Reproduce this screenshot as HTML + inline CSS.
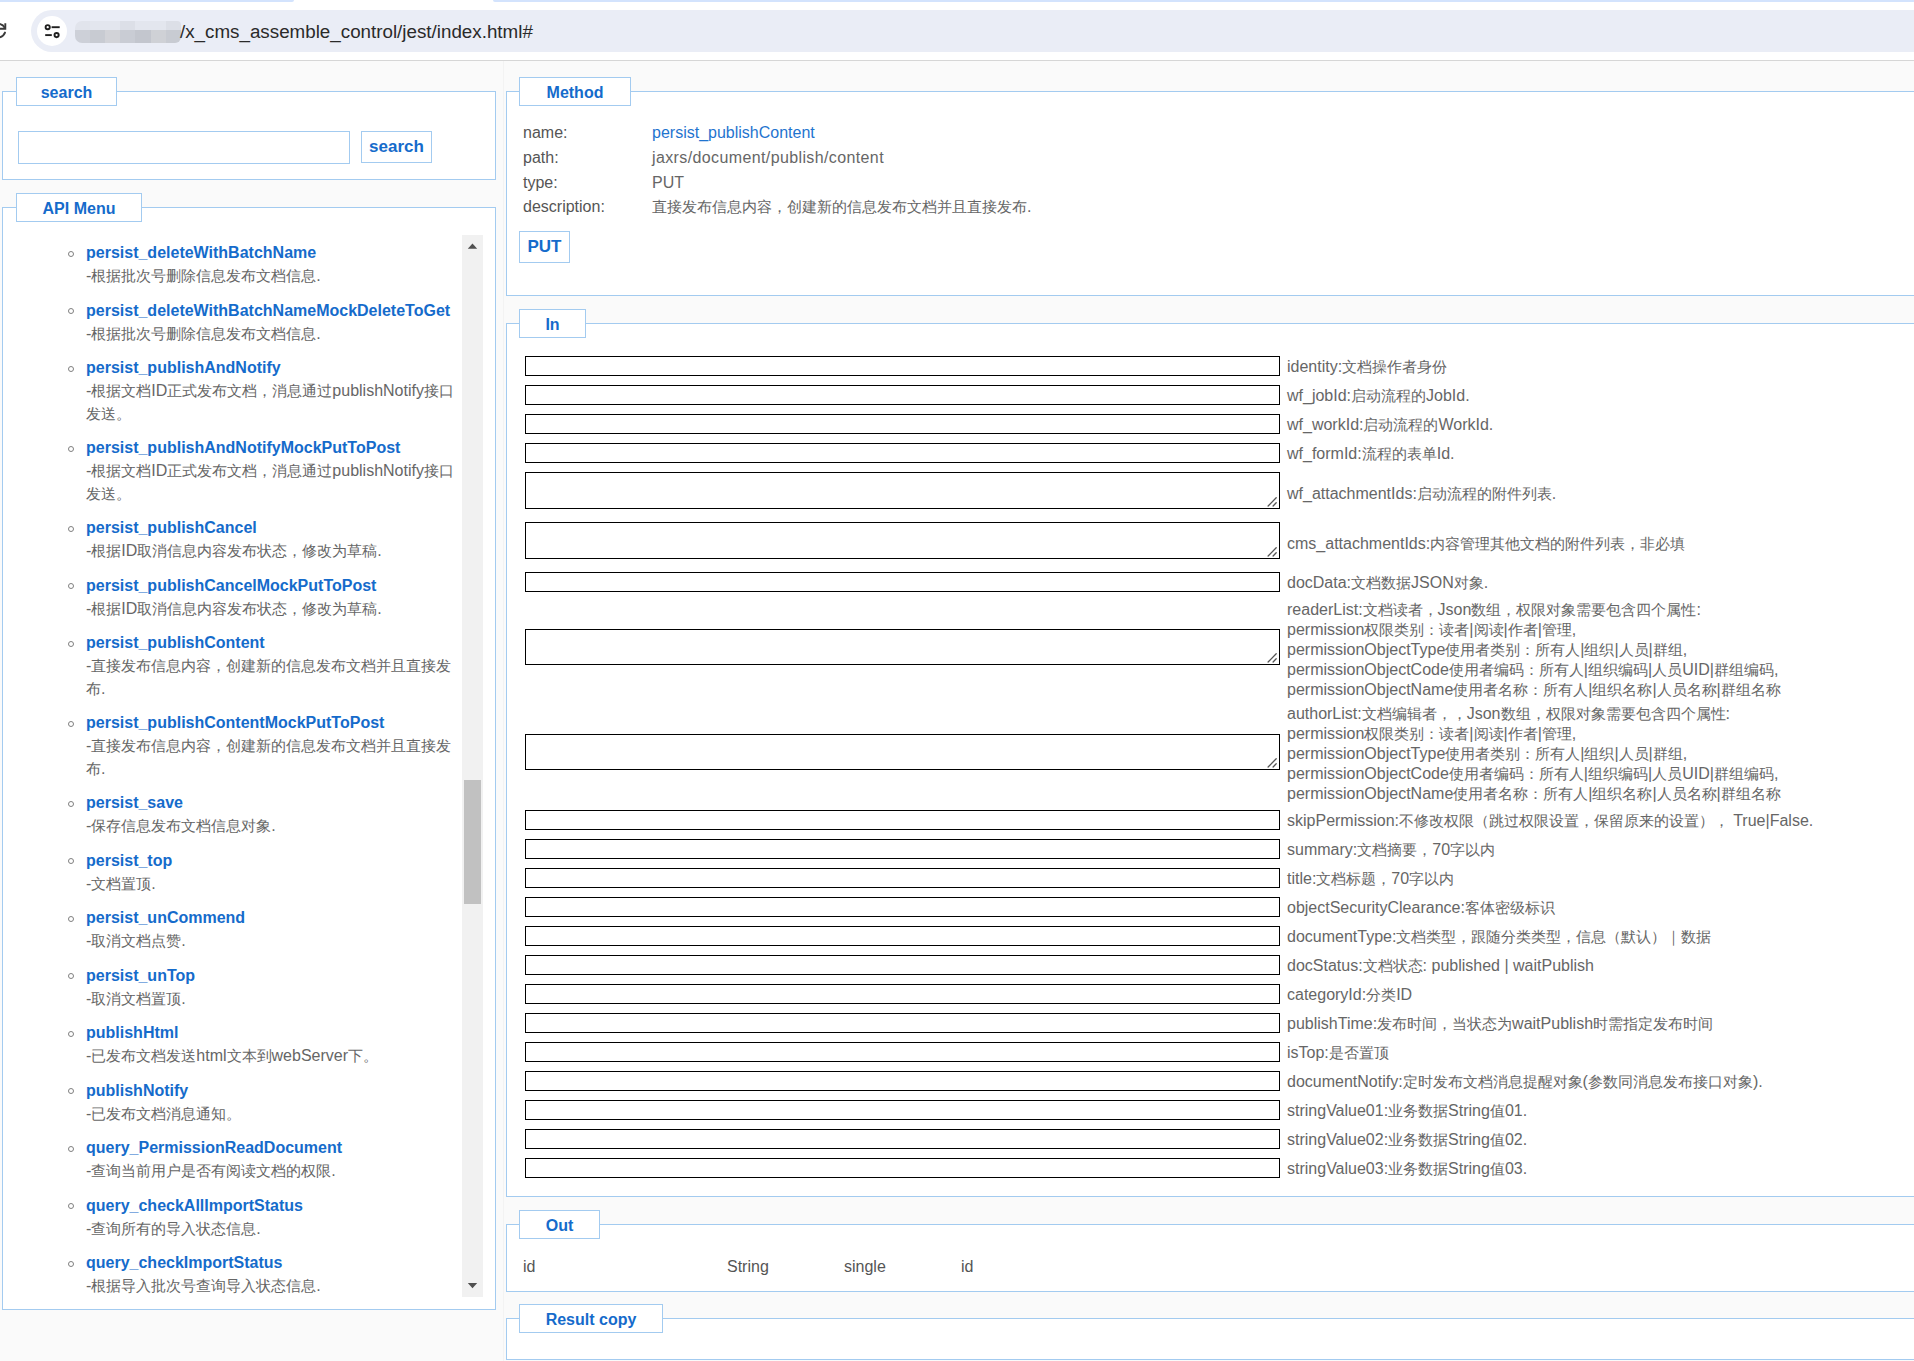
<!DOCTYPE html>
<html><head><meta charset="utf-8"><title>jest</title><style>
*{margin:0;padding:0;box-sizing:content-box}
html,body{width:1914px;height:1361px;overflow:hidden;background:#fafafa;font-family:"Liberation Sans",sans-serif}
body{position:relative}
.t{position:absolute;white-space:nowrap;font-size:16px;line-height:20px;color:#666666}
.u{position:absolute;white-space:nowrap;font-size:18.8px;line-height:24px;color:#2a2a2a}
.mt{font-weight:bold;color:#156bcb}
.md{color:#666666}
.lb{color:#555555}
.lbl{color:#666666}
.fs{position:absolute;border:1px solid #a3cbf0;background:#fff}
.lg{position:absolute;border:1px solid #a3cbf0;background:#fff;text-align:center;font-weight:bold;font-size:16px;color:#156bcb;white-space:nowrap}
.box{position:absolute;border:1px solid #a3cbf0;background:#fff}
.btn{position:absolute;border:1px solid #a3cbf0;background:#fff;text-align:center;font-weight:bold;font-size:17px;color:#156bcb}
.bul{position:absolute;width:4.4px;height:4.4px;border:1.2px solid #808080;border-radius:50%}
.inp{position:absolute;left:525px;width:753px;border:1px solid #000;background:#fff}
i{display:inline-block;width:15px;font-style:normal;text-align:center;font-size:15px}
.grip{position:absolute;right:-1px;bottom:-1px}
.nocjk i{color:transparent}
.nocjk i{background:linear-gradient(#585858,#585858) 1.5px 4px/12px 1px no-repeat,linear-gradient(#585858,#585858) 1.5px 9.5px/12px 1px no-repeat,linear-gradient(#585858,#585858) 1.5px 15px/12px 1px no-repeat,linear-gradient(#585858,#585858) 4.5px 3.5px/1px 13px no-repeat,linear-gradient(#585858,#585858) 10px 3.5px/1px 13px no-repeat}
.nocjk i.g1{background:linear-gradient(#585858,#585858) 1.5px 5px/12px 1px no-repeat,linear-gradient(#585858,#585858) 2px 12px/11px 1px no-repeat,linear-gradient(#585858,#585858) 3px 3.5px/1px 13px no-repeat,linear-gradient(#585858,#585858) 7.5px 3.5px/1px 13px no-repeat,linear-gradient(#585858,#585858) 12px 3.5px/1px 13px no-repeat}
.nocjk i.g2{background:linear-gradient(#585858,#585858) 2.5px 4px/10px 1px no-repeat,linear-gradient(#585858,#585858) 2.5px 9.5px/10px 1px no-repeat,linear-gradient(#585858,#585858) 1.5px 15.5px/12px 1px no-repeat,linear-gradient(#585858,#585858) 2.5px 4px/1px 12px no-repeat,linear-gradient(#585858,#585858) 12px 4px/1px 12px no-repeat,linear-gradient(#585858,#585858) 7.5px 2.5px/1px 8px no-repeat}
.nocjk i.pc{background:linear-gradient(#585858,#585858) 2px 13.5px/2px 3px no-repeat}
.nocjk i.pp{background:radial-gradient(circle at 4px 14px,transparent 1.2px,#585858 1.4px,#585858 2.3px,transparent 2.5px) no-repeat}
.nocjk i.pk{background:linear-gradient(#585858,#585858) 3px 7px/2px 2px no-repeat,linear-gradient(#585858,#585858) 3px 13px/2px 2px no-repeat}
.nocjk i.pl{background:linear-gradient(#585858,#585858) 10px 3px/1px 15px no-repeat}
.nocjk i.pr{background:linear-gradient(#585858,#585858) 4px 3px/1px 15px no-repeat}
.nocjk i.pv{background:linear-gradient(#585858,#585858) 7px 2px/1px 17px no-repeat}

</style></head>
<body>
<div style="position:absolute;left:0;top:0;width:1914px;height:61px;background:#ffffff"></div>
<div style="position:absolute;left:-10px;top:0;width:304px;height:2px;background:#d3e3fd;border-radius:0 0 4px 0"></div>
<div style="position:absolute;left:493px;top:0;width:1440px;height:2px;background:#d3e3fd;border-radius:0 0 0 4px"></div>
<div style="position:absolute;left:31px;top:10px;width:1950px;height:42px;border-radius:21px;background:#eaedf6"></div>
<div style="position:absolute;left:37px;top:16px;width:30px;height:30px;border-radius:15px;background:#ffffff"></div>
<svg style="position:absolute;left:42px;top:21px" width="20" height="20" viewBox="0 0 20 20">
<circle cx="5.7" cy="6.2" r="2.1" fill="none" stroke="#1f1f1f" stroke-width="1.9"/>
<line x1="9.6" y1="6.2" x2="17.7" y2="6.2" stroke="#1f1f1f" stroke-width="1.9"/>
<circle cx="14.6" cy="14.1" r="2.1" fill="none" stroke="#1f1f1f" stroke-width="1.9"/>
<line x1="3.2" y1="14.1" x2="9.8" y2="14.1" stroke="#1f1f1f" stroke-width="1.9"/>
</svg>
<svg style="position:absolute;left:0;top:15px" width="30" height="30" viewBox="0 0 30 30">
<path d="M5.3 8.2 V13.8 H-2" fill="none" stroke="#3a3a3a" stroke-width="1.9"/>
<path d="M-2 8.6 Q3 9.2 4.8 12.8" fill="none" stroke="#3a3a3a" stroke-width="1.9"/>
<path d="M5 17.6 Q3.5 21.8 -2 22.6" fill="none" stroke="#3a3a3a" stroke-width="1.9" stroke-linecap="round"/>
</svg>
<div style="position:absolute;left:75px;top:21px;width:106px;height:22px;border-radius:7px 4px 6px 7px;overflow:hidden"><div style="position:absolute;left:0.0px;top:0;width:15.2px;height:9px;background:#e1e4ec"></div><div style="position:absolute;left:0.0px;top:9px;width:15.2px;height:13px;background:#cdd0d8"></div><div style="position:absolute;left:15.1px;top:0;width:15.2px;height:9px;background:#e3e6ee"></div><div style="position:absolute;left:15.1px;top:9px;width:15.2px;height:13px;background:#c8cbd2"></div><div style="position:absolute;left:30.2px;top:0;width:15.2px;height:9px;background:#e3e6ee"></div><div style="position:absolute;left:30.2px;top:9px;width:15.2px;height:13px;background:#d2d3d8"></div><div style="position:absolute;left:45.3px;top:0;width:15.2px;height:9px;background:#dcdfe7"></div><div style="position:absolute;left:45.3px;top:9px;width:15.2px;height:13px;background:#c9ccd4"></div><div style="position:absolute;left:60.4px;top:0;width:15.2px;height:9px;background:#e3e6ee"></div><div style="position:absolute;left:60.4px;top:9px;width:15.2px;height:13px;background:#c3c6ce"></div><div style="position:absolute;left:75.5px;top:0;width:15.2px;height:9px;background:#e3e6ee"></div><div style="position:absolute;left:75.5px;top:9px;width:15.2px;height:13px;background:#cfd1d6"></div><div style="position:absolute;left:90.6px;top:0;width:15.2px;height:9px;background:#dcdfe7"></div><div style="position:absolute;left:90.6px;top:9px;width:15.2px;height:13px;background:#c8cbd2"></div></div>
<div class="u" style="left:180px;top:19.5px">/x_cms_assemble_control/jest/index.html#</div>
<div style="position:absolute;left:0;top:60px;width:1914px;height:1px;background:#d6d6d6"></div>
<div class="fs" style="left:2px;top:91px;width:492px;height:87px;"></div>
<div class="lg" style="left:16px;top:77px;width:99px;height:27px"><span style="position:absolute;left:0;right:0;top:1.0px;line-height:27px">search</span></div>
<div class="box" style="left:18px;top:131px;width:330px;height:31px"></div>
<div class="btn" style="left:361px;top:131px;width:69px;height:30px;line-height:30px">search</div>
<div class="fs" style="left:2px;top:207px;width:492px;height:1101px;"></div>
<div class="lg" style="left:16px;top:193px;width:124px;height:27px"><span style="position:absolute;left:0;right:0;top:1.0px;line-height:27px">API Menu</span></div>
<div style="position:absolute;left:3px;top:235px;width:459px;height:1062px;overflow:hidden"><div style="position:absolute;left:-3px;top:-235px">
<div class="bul" style="left:68.1px;top:250.50px"></div>
<div class="t mt" style="left:86px;top:243.06px;">persist_deleteWithBatchName</div>
<div class="t md" style="left:86px;top:266.06px;">-<i class="g2">根</i><i class="g2">据</i><i>批</i><i class="g2">次</i><i>号</i><i>删</i><i class="g1">除</i><i class="g1">信</i><i>息</i><i class="g1">发</i><i class="g1">布</i><i class="g2">文</i><i class="g2">档</i><i class="g1">信</i><i>息</i>.</div>
<div class="bul" style="left:68.1px;top:308.00px"></div>
<div class="t mt" style="left:86px;top:300.56px;">persist_deleteWithBatchNameMockDeleteToGet</div>
<div class="t md" style="left:86px;top:323.56px;">-<i class="g2">根</i><i class="g2">据</i><i>批</i><i class="g2">次</i><i>号</i><i>删</i><i class="g1">除</i><i class="g1">信</i><i>息</i><i class="g1">发</i><i class="g1">布</i><i class="g2">文</i><i class="g2">档</i><i class="g1">信</i><i>息</i>.</div>
<div class="bul" style="left:68.1px;top:365.50px"></div>
<div class="t mt" style="left:86px;top:358.06px;">persist_publishAndNotify</div>
<div class="t md" style="left:86px;top:381.06px;">-<i class="g2">根</i><i class="g2">据</i><i class="g2">文</i><i class="g2">档</i>ID<i class="g2">正</i><i class="g2">式</i><i class="g1">发</i><i class="g1">布</i><i class="g2">文</i><i class="g2">档</i><i class="pc">，</i><i class="g2">消</i><i>息</i><i class="g2">通</i><i>过</i>publishNotify<i>接</i><i class="g1">口</i></div>
<div class="t md" style="left:86px;top:403.56px;"><i class="g1">发</i><i class="g1">送</i><i class="pp">。</i></div>
<div class="bul" style="left:68.1px;top:445.50px"></div>
<div class="t mt" style="left:86px;top:438.06px;">persist_publishAndNotifyMockPutToPost</div>
<div class="t md" style="left:86px;top:461.06px;">-<i class="g2">根</i><i class="g2">据</i><i class="g2">文</i><i class="g2">档</i>ID<i class="g2">正</i><i class="g2">式</i><i class="g1">发</i><i class="g1">布</i><i class="g2">文</i><i class="g2">档</i><i class="pc">，</i><i class="g2">消</i><i>息</i><i class="g2">通</i><i>过</i>publishNotify<i>接</i><i class="g1">口</i></div>
<div class="t md" style="left:86px;top:483.56px;"><i class="g1">发</i><i class="g1">送</i><i class="pp">。</i></div>
<div class="bul" style="left:68.1px;top:525.50px"></div>
<div class="t mt" style="left:86px;top:518.06px;">persist_publishCancel</div>
<div class="t md" style="left:86px;top:541.06px;">-<i class="g2">根</i><i class="g2">据</i>ID<i>取</i><i class="g2">消</i><i class="g1">信</i><i>息</i><i class="g1">内</i><i>容</i><i class="g1">发</i><i class="g1">布</i><i class="g2">状</i><i class="g1">态</i><i class="pc">，</i><i class="g2">修</i><i class="g2">改</i><i class="g1">为</i><i>草</i><i class="g2">稿</i>.</div>
<div class="bul" style="left:68.1px;top:583.00px"></div>
<div class="t mt" style="left:86px;top:575.56px;">persist_publishCancelMockPutToPost</div>
<div class="t md" style="left:86px;top:598.56px;">-<i class="g2">根</i><i class="g2">据</i>ID<i>取</i><i class="g2">消</i><i class="g1">信</i><i>息</i><i class="g1">内</i><i>容</i><i class="g1">发</i><i class="g1">布</i><i class="g2">状</i><i class="g1">态</i><i class="pc">，</i><i class="g2">修</i><i class="g2">改</i><i class="g1">为</i><i>草</i><i class="g2">稿</i>.</div>
<div class="bul" style="left:68.1px;top:640.50px"></div>
<div class="t mt" style="left:86px;top:633.06px;">persist_publishContent</div>
<div class="t md" style="left:86px;top:656.06px;">-<i class="g2">直</i><i>接</i><i class="g1">发</i><i class="g1">布</i><i class="g1">信</i><i>息</i><i class="g1">内</i><i>容</i><i class="pc">，</i><i class="g1">创</i><i class="g2">建</i><i class="g1">新</i><i class="g1">的</i><i class="g1">信</i><i>息</i><i class="g1">发</i><i class="g1">布</i><i class="g2">文</i><i class="g2">档</i><i class="g2">并</i><i class="g2">且</i><i class="g2">直</i><i>接</i><i class="g1">发</i></div>
<div class="t md" style="left:86px;top:678.56px;"><i class="g1">布</i>.</div>
<div class="bul" style="left:68.1px;top:720.50px"></div>
<div class="t mt" style="left:86px;top:713.06px;">persist_publishContentMockPutToPost</div>
<div class="t md" style="left:86px;top:736.06px;">-<i class="g2">直</i><i>接</i><i class="g1">发</i><i class="g1">布</i><i class="g1">信</i><i>息</i><i class="g1">内</i><i>容</i><i class="pc">，</i><i class="g1">创</i><i class="g2">建</i><i class="g1">新</i><i class="g1">的</i><i class="g1">信</i><i>息</i><i class="g1">发</i><i class="g1">布</i><i class="g2">文</i><i class="g2">档</i><i class="g2">并</i><i class="g2">且</i><i class="g2">直</i><i>接</i><i class="g1">发</i></div>
<div class="t md" style="left:86px;top:758.56px;"><i class="g1">布</i>.</div>
<div class="bul" style="left:68.1px;top:800.50px"></div>
<div class="t mt" style="left:86px;top:793.06px;">persist_save</div>
<div class="t md" style="left:86px;top:816.06px;">-<i>保</i><i class="g2">存</i><i class="g1">信</i><i>息</i><i class="g1">发</i><i class="g1">布</i><i class="g2">文</i><i class="g2">档</i><i class="g1">信</i><i>息</i><i class="g1">对</i><i>象</i>.</div>
<div class="bul" style="left:68.1px;top:858.00px"></div>
<div class="t mt" style="left:86px;top:850.56px;">persist_top</div>
<div class="t md" style="left:86px;top:873.56px;">-<i class="g2">文</i><i class="g2">档</i><i>置</i><i>顶</i>.</div>
<div class="bul" style="left:68.1px;top:915.50px"></div>
<div class="t mt" style="left:86px;top:908.06px;">persist_unCommend</div>
<div class="t md" style="left:86px;top:931.06px;">-<i>取</i><i class="g2">消</i><i class="g2">文</i><i class="g2">档</i><i>点</i><i class="g1">赞</i>.</div>
<div class="bul" style="left:68.1px;top:973.00px"></div>
<div class="t mt" style="left:86px;top:965.56px;">persist_unTop</div>
<div class="t md" style="left:86px;top:988.56px;">-<i>取</i><i class="g2">消</i><i class="g2">文</i><i class="g2">档</i><i>置</i><i>顶</i>.</div>
<div class="bul" style="left:68.1px;top:1030.50px"></div>
<div class="t mt" style="left:86px;top:1023.06px;">publishHtml</div>
<div class="t md" style="left:86px;top:1046.06px;">-<i class="g2">已</i><i class="g1">发</i><i class="g1">布</i><i class="g2">文</i><i class="g2">档</i><i class="g1">发</i><i class="g1">送</i>html<i class="g2">文</i><i>本</i><i class="g1">到</i>webServer<i class="g2">下</i><i class="pp">。</i></div>
<div class="bul" style="left:68.1px;top:1088.00px"></div>
<div class="t mt" style="left:86px;top:1080.56px;">publishNotify</div>
<div class="t md" style="left:86px;top:1103.56px;">-<i class="g2">已</i><i class="g1">发</i><i class="g1">布</i><i class="g2">文</i><i class="g2">档</i><i class="g2">消</i><i>息</i><i class="g2">通</i><i>知</i><i class="pp">。</i></div>
<div class="bul" style="left:68.1px;top:1145.50px"></div>
<div class="t mt" style="left:86px;top:1138.06px;">query_PermissionReadDocument</div>
<div class="t md" style="left:86px;top:1161.06px;">-<i class="g2">查</i><i class="g2">询</i><i class="g1">当</i><i>前</i><i class="g1">用</i><i>户</i><i class="g2">是</i><i class="g2">否</i><i class="g1">有</i><i class="g2">阅</i><i>读</i><i class="g2">文</i><i class="g2">档</i><i class="g1">的</i><i class="g2">权</i><i class="g2">限</i>.</div>
<div class="bul" style="left:68.1px;top:1203.00px"></div>
<div class="t mt" style="left:86px;top:1195.56px;">query_checkAllImportStatus</div>
<div class="t md" style="left:86px;top:1218.56px;">-<i class="g2">查</i><i class="g2">询</i><i>所</i><i class="g1">有</i><i class="g1">的</i><i class="g1">导</i><i class="g2">入</i><i class="g2">状</i><i class="g1">态</i><i class="g1">信</i><i>息</i>.</div>
<div class="bul" style="left:68.1px;top:1260.50px"></div>
<div class="t mt" style="left:86px;top:1253.06px;">query_checkImportStatus</div>
<div class="t md" style="left:86px;top:1276.06px;">-<i class="g2">根</i><i class="g2">据</i><i class="g1">导</i><i class="g2">入</i><i>批</i><i class="g2">次</i><i>号</i><i class="g2">查</i><i class="g2">询</i><i class="g1">导</i><i class="g2">入</i><i class="g2">状</i><i class="g1">态</i><i class="g1">信</i><i>息</i>.</div>
</div></div>
<div style="position:absolute;left:462px;top:235px;width:21px;height:1062px;background:#f1f1f1"></div>
<div style="position:absolute;left:464px;top:780px;width:17px;height:124px;background:#c1c1c1"></div>
<svg style="position:absolute;left:0;top:0" width="490" height="1300" viewBox="0 0 490 1300"><polygon points="467.8,248.8 477.2,248.8 472.5,243.6" fill="#505050"/><polygon points="467.8,1283 477.2,1283 472.5,1288.2" fill="#505050"/></svg>
<div style="position:absolute;left:503px;top:61px;width:1px;height:1300px;background:#f3f3f3"></div>
<div class="fs" style="left:506px;top:91px;width:1500px;height:203px;"></div>
<div class="lg" style="left:519px;top:77px;width:110px;height:27px"><span style="position:absolute;left:0;right:0;top:1.0px;line-height:27px">Method</span></div>
<div class="t lb" style="left:523px;top:123.46px;">name:</div>
<div class="t" style="left:652px;top:123.46px;color:#1f74cf">persist_publishContent</div>
<div class="t lb" style="left:523px;top:148.01px;">path:</div>
<div class="t" style="left:652px;top:148.01px;color:#666666;letter-spacing:0.38px">jaxrs/document/publish/content</div>
<div class="t lb" style="left:523px;top:172.56px;">type:</div>
<div class="t" style="left:652px;top:172.56px;color:#666666">PUT</div>
<div class="t lb" style="left:523px;top:197.11px;">description:</div>
<div class="t" style="left:652px;top:197.11px;color:#666666"><i class="g2">直</i><i>接</i><i class="g1">发</i><i class="g1">布</i><i class="g1">信</i><i>息</i><i class="g1">内</i><i>容</i><i class="pc">，</i><i class="g1">创</i><i class="g2">建</i><i class="g1">新</i><i class="g1">的</i><i class="g1">信</i><i>息</i><i class="g1">发</i><i class="g1">布</i><i class="g2">文</i><i class="g2">档</i><i class="g2">并</i><i class="g2">且</i><i class="g2">直</i><i>接</i><i class="g1">发</i><i class="g1">布</i>.</div>
<div class="btn" style="left:519px;top:231px;width:49px;height:30px;line-height:30px">PUT</div>
<div class="fs" style="left:506px;top:323px;width:1500px;height:872px;"></div>
<div class="lg" style="left:519px;top:309px;width:65px;height:27px"><span style="position:absolute;left:0;right:0;top:1.0px;line-height:27px">In</span></div>
<div class="inp" style="top:356px;height:18px"></div>
<div class="t lbl" style="left:1287px;top:356.96px;">identity:<i class="g2">文</i><i class="g2">档</i><i class="g2">操</i><i>作</i><i class="g1">者</i><i class="g1">身</i><i class="g1">份</i></div>
<div class="inp" style="top:385px;height:18px"></div>
<div class="t lbl" style="left:1287px;top:385.96px;">wf_jobId:<i class="g2">启</i><i class="g1">动</i><i>流</i><i class="g1">程</i><i class="g1">的</i>JobId.</div>
<div class="inp" style="top:414px;height:18px"></div>
<div class="t lbl" style="left:1287px;top:414.96px;">wf_workId:<i class="g2">启</i><i class="g1">动</i><i>流</i><i class="g1">程</i><i class="g1">的</i>WorkId.</div>
<div class="inp" style="top:443px;height:18px"></div>
<div class="t lbl" style="left:1287px;top:443.96px;">wf_formId:<i>流</i><i class="g1">程</i><i class="g1">的</i><i>表</i><i>单</i>Id.</div>
<div class="inp" style="top:472px;height:35px"><svg class="grip" width="14" height="14" viewBox="0 0 14 14"><path d="M2.1 11 L10.2 2.8 M7.1 11 L10.2 7.8" stroke="#555" stroke-width="1.3" stroke-linecap="round"/></svg></div>
<div class="t lbl" style="left:1287px;top:483.76px;">wf_attachmentIds:<i class="g2">启</i><i class="g1">动</i><i>流</i><i class="g1">程</i><i class="g1">的</i><i class="g2">附</i><i>件</i><i>列</i><i>表</i>.</div>
<div class="inp" style="top:522px;height:35px"><svg class="grip" width="14" height="14" viewBox="0 0 14 14"><path d="M2.1 11 L10.2 2.8 M7.1 11 L10.2 7.8" stroke="#555" stroke-width="1.3" stroke-linecap="round"/></svg></div>
<div class="t lbl" style="left:1287px;top:533.76px;">cms_attachmentIds:<i class="g1">内</i><i>容</i><i class="g2">管</i><i class="g2">理</i><i class="g1">其</i><i class="g1">他</i><i class="g2">文</i><i class="g2">档</i><i class="g1">的</i><i class="g2">附</i><i>件</i><i>列</i><i>表</i><i class="pc">，</i><i class="g2">非</i><i class="g1">必</i><i>填</i></div>
<div class="inp" style="top:572px;height:18px"></div>
<div class="t lbl" style="left:1287px;top:572.96px;">docData:<i class="g2">文</i><i class="g2">档</i><i>数</i><i class="g2">据</i>JSON<i class="g1">对</i><i>象</i>.</div>
<div class="inp" style="top:629px;height:34px"><svg class="grip" width="14" height="14" viewBox="0 0 14 14"><path d="M2.1 11 L10.2 2.8 M7.1 11 L10.2 7.8" stroke="#555" stroke-width="1.3" stroke-linecap="round"/></svg></div>
<div class="t lbl" style="left:1287px;top:600.16px;">readerList:<i class="g2">文</i><i class="g2">档</i><i>读</i><i class="g1">者</i><i class="pc">，</i>Json<i>数</i><i class="g1">组</i><i class="pc">，</i><i class="g2">权</i><i class="g2">限</i><i class="g1">对</i><i>象</i><i class="g1">需</i><i class="g2">要</i><i class="g1">包</i><i class="g1">含</i><i class="g2">四</i><i>个</i><i>属</i><i>性</i>:</div>
<div class="t lbl" style="left:1287px;top:620.16px;">permission<i class="g2">权</i><i class="g2">限</i><i class="g1">类</i><i class="g2">别</i><i class="pk">：</i><i>读</i><i class="g1">者</i>|<i class="g2">阅</i><i>读</i>|<i>作</i><i class="g1">者</i>|<i class="g2">管</i><i class="g2">理</i>,</div>
<div class="t lbl" style="left:1287px;top:640.16px;">permissionObjectType<i class="g2">使</i><i class="g1">用</i><i class="g1">者</i><i class="g1">类</i><i class="g2">别</i><i class="pk">：</i><i>所</i><i class="g1">有</i><i>人</i>|<i class="g1">组</i><i class="g1">织</i>|<i>人</i><i class="g1">员</i>|<i>群</i><i class="g1">组</i>,</div>
<div class="t lbl" style="left:1287px;top:660.16px;">permissionObjectCode<i class="g2">使</i><i class="g1">用</i><i class="g1">者</i><i class="g2">编</i><i class="g1">码</i><i class="pk">：</i><i>所</i><i class="g1">有</i><i>人</i>|<i class="g1">组</i><i class="g1">织</i><i class="g2">编</i><i class="g1">码</i>|<i>人</i><i class="g1">员</i>UID|<i>群</i><i class="g1">组</i><i class="g2">编</i><i class="g1">码</i>,</div>
<div class="t lbl" style="left:1287px;top:680.16px;">permissionObjectName<i class="g2">使</i><i class="g1">用</i><i class="g1">者</i><i class="g1">名</i><i class="g1">称</i><i class="pk">：</i><i>所</i><i class="g1">有</i><i>人</i>|<i class="g1">组</i><i class="g1">织</i><i class="g1">名</i><i class="g1">称</i>|<i>人</i><i class="g1">员</i><i class="g1">名</i><i class="g1">称</i>|<i>群</i><i class="g1">组</i><i class="g1">名</i><i class="g1">称</i></div>
<div class="inp" style="top:733.5px;height:34px"><svg class="grip" width="14" height="14" viewBox="0 0 14 14"><path d="M2.1 11 L10.2 2.8 M7.1 11 L10.2 7.8" stroke="#555" stroke-width="1.3" stroke-linecap="round"/></svg></div>
<div class="t lbl" style="left:1287px;top:704.06px;">authorList:<i class="g2">文</i><i class="g2">档</i><i class="g2">编</i><i>辑</i><i class="g1">者</i><i class="pc">，</i><i class="pc">，</i>Json<i>数</i><i class="g1">组</i><i class="pc">，</i><i class="g2">权</i><i class="g2">限</i><i class="g1">对</i><i>象</i><i class="g1">需</i><i class="g2">要</i><i class="g1">包</i><i class="g1">含</i><i class="g2">四</i><i>个</i><i>属</i><i>性</i>:</div>
<div class="t lbl" style="left:1287px;top:724.06px;">permission<i class="g2">权</i><i class="g2">限</i><i class="g1">类</i><i class="g2">别</i><i class="pk">：</i><i>读</i><i class="g1">者</i>|<i class="g2">阅</i><i>读</i>|<i>作</i><i class="g1">者</i>|<i class="g2">管</i><i class="g2">理</i>,</div>
<div class="t lbl" style="left:1287px;top:744.06px;">permissionObjectType<i class="g2">使</i><i class="g1">用</i><i class="g1">者</i><i class="g1">类</i><i class="g2">别</i><i class="pk">：</i><i>所</i><i class="g1">有</i><i>人</i>|<i class="g1">组</i><i class="g1">织</i>|<i>人</i><i class="g1">员</i>|<i>群</i><i class="g1">组</i>,</div>
<div class="t lbl" style="left:1287px;top:764.06px;">permissionObjectCode<i class="g2">使</i><i class="g1">用</i><i class="g1">者</i><i class="g2">编</i><i class="g1">码</i><i class="pk">：</i><i>所</i><i class="g1">有</i><i>人</i>|<i class="g1">组</i><i class="g1">织</i><i class="g2">编</i><i class="g1">码</i>|<i>人</i><i class="g1">员</i>UID|<i>群</i><i class="g1">组</i><i class="g2">编</i><i class="g1">码</i>,</div>
<div class="t lbl" style="left:1287px;top:784.06px;">permissionObjectName<i class="g2">使</i><i class="g1">用</i><i class="g1">者</i><i class="g1">名</i><i class="g1">称</i><i class="pk">：</i><i>所</i><i class="g1">有</i><i>人</i>|<i class="g1">组</i><i class="g1">织</i><i class="g1">名</i><i class="g1">称</i>|<i>人</i><i class="g1">员</i><i class="g1">名</i><i class="g1">称</i>|<i>群</i><i class="g1">组</i><i class="g1">名</i><i class="g1">称</i></div>
<div class="inp" style="top:810px;height:18px"></div>
<div class="t lbl" style="left:1287px;top:810.96px;">skipPermission:<i class="g1">不</i><i class="g2">修</i><i class="g2">改</i><i class="g2">权</i><i class="g2">限</i><i class="pl">（</i><i>跳</i><i>过</i><i class="g2">权</i><i class="g2">限</i><i class="g2">设</i><i>置</i><i class="pc">，</i><i>保</i><i class="g2">留</i><i class="g2">原</i><i>来</i><i class="g1">的</i><i class="g2">设</i><i>置</i><i class="pr">）</i><i class="pc">，</i>  True|False.</div>
<div class="inp" style="top:839px;height:18px"></div>
<div class="t lbl" style="left:1287px;top:839.96px;">summary:<i class="g2">文</i><i class="g2">档</i><i class="g2">摘</i><i class="g2">要</i><i class="pc">，</i>70<i class="g1">字</i><i class="g1">以</i><i class="g1">内</i></div>
<div class="inp" style="top:868px;height:18px"></div>
<div class="t lbl" style="left:1287px;top:868.96px;">title:<i class="g2">文</i><i class="g2">档</i><i>标</i><i class="g1">题</i><i class="pc">，</i>70<i class="g1">字</i><i class="g1">以</i><i class="g1">内</i></div>
<div class="inp" style="top:897px;height:18px"></div>
<div class="t lbl" style="left:1287px;top:897.96px;">objectSecurityClearance:<i class="g1">客</i><i>体</i><i class="g1">密</i><i class="g2">级</i><i>标</i><i class="g1">识</i></div>
<div class="inp" style="top:926px;height:18px"></div>
<div class="t lbl" style="left:1287px;top:926.96px;">documentType:<i class="g2">文</i><i class="g2">档</i><i class="g1">类</i><i class="g1">型</i><i class="pc">，</i><i class="g1">跟</i><i class="g2">随</i><i class="g1">分</i><i class="g1">类</i><i class="g1">类</i><i class="g1">型</i><i class="pc">，</i><i class="g1">信</i><i>息</i><i class="pl">（</i><i class="g2">默</i><i>认</i><i class="pr">）</i><i class="pv">｜</i><i>数</i><i class="g2">据</i></div>
<div class="inp" style="top:955px;height:18px"></div>
<div class="t lbl" style="left:1287px;top:955.96px;">docStatus:<i class="g2">文</i><i class="g2">档</i><i class="g2">状</i><i class="g1">态</i>: published | waitPublish</div>
<div class="inp" style="top:984px;height:18px"></div>
<div class="t lbl" style="left:1287px;top:984.96px;">categoryId:<i class="g1">分</i><i class="g1">类</i>ID</div>
<div class="inp" style="top:1013px;height:18px"></div>
<div class="t lbl" style="left:1287px;top:1013.96px;">publishTime:<i class="g1">发</i><i class="g1">布</i><i class="g2">时</i><i>间</i><i class="pc">，</i><i class="g1">当</i><i class="g2">状</i><i class="g1">态</i><i class="g1">为</i>waitPublish<i class="g2">时</i><i class="g1">需</i><i class="g1">指</i><i class="g2">定</i><i class="g1">发</i><i class="g1">布</i><i class="g2">时</i><i>间</i></div>
<div class="inp" style="top:1042px;height:18px"></div>
<div class="t lbl" style="left:1287px;top:1042.96px;">isTop:<i class="g2">是</i><i class="g2">否</i><i>置</i><i>顶</i></div>
<div class="inp" style="top:1071px;height:18px"></div>
<div class="t lbl" style="left:1287px;top:1071.96px;">documentNotify:<i class="g2">定</i><i class="g2">时</i><i class="g1">发</i><i class="g1">布</i><i class="g2">文</i><i class="g2">档</i><i class="g2">消</i><i>息</i><i class="g1">提</i><i>醒</i><i class="g1">对</i><i>象</i>(<i class="g1">参</i><i>数</i><i>同</i><i class="g2">消</i><i>息</i><i class="g1">发</i><i class="g1">布</i><i>接</i><i class="g1">口</i><i class="g1">对</i><i>象</i>).</div>
<div class="inp" style="top:1100px;height:18px"></div>
<div class="t lbl" style="left:1287px;top:1100.96px;">stringValue01:<i class="g2">业</i><i>务</i><i>数</i><i class="g2">据</i>String<i class="g2">值</i>01.</div>
<div class="inp" style="top:1129px;height:18px"></div>
<div class="t lbl" style="left:1287px;top:1129.96px;">stringValue02:<i class="g2">业</i><i>务</i><i>数</i><i class="g2">据</i>String<i class="g2">值</i>02.</div>
<div class="inp" style="top:1158px;height:18px"></div>
<div class="t lbl" style="left:1287px;top:1158.96px;">stringValue03:<i class="g2">业</i><i>务</i><i>数</i><i class="g2">据</i>String<i class="g2">值</i>03.</div>
<div class="fs" style="left:506px;top:1224px;width:1500px;height:66px;"></div>
<div class="lg" style="left:519px;top:1210px;width:79px;height:27px"><span style="position:absolute;left:0;right:0;top:1.0px;line-height:27px">Out</span></div>
<div class="t lb" style="left:523px;top:1257.16px;">id</div>
<div class="t lb" style="left:727px;top:1257.16px;">String</div>
<div class="t lb" style="left:844px;top:1257.16px;">single</div>
<div class="t lb" style="left:961px;top:1257.16px;">id</div>
<div class="fs" style="left:506px;top:1318px;width:1500px;height:40px;"></div>
<div class="lg" style="left:519px;top:1304px;width:142px;height:27px"><span style="position:absolute;left:0;right:0;top:1.0px;line-height:27px">Result copy</span></div>
<script>(function(){var s=document.createElement('span');s.style.cssText='position:absolute;left:-9999px;top:0;font-size:100px;line-height:100px;white-space:nowrap;font-family:"Liberation Sans",sans-serif';s.textContent='文档';document.body.appendChild(s);var w=s.getBoundingClientRect().width;document.body.removeChild(s);if(w<185)document.documentElement.className+=' nocjk';})();</script>
</body></html>
